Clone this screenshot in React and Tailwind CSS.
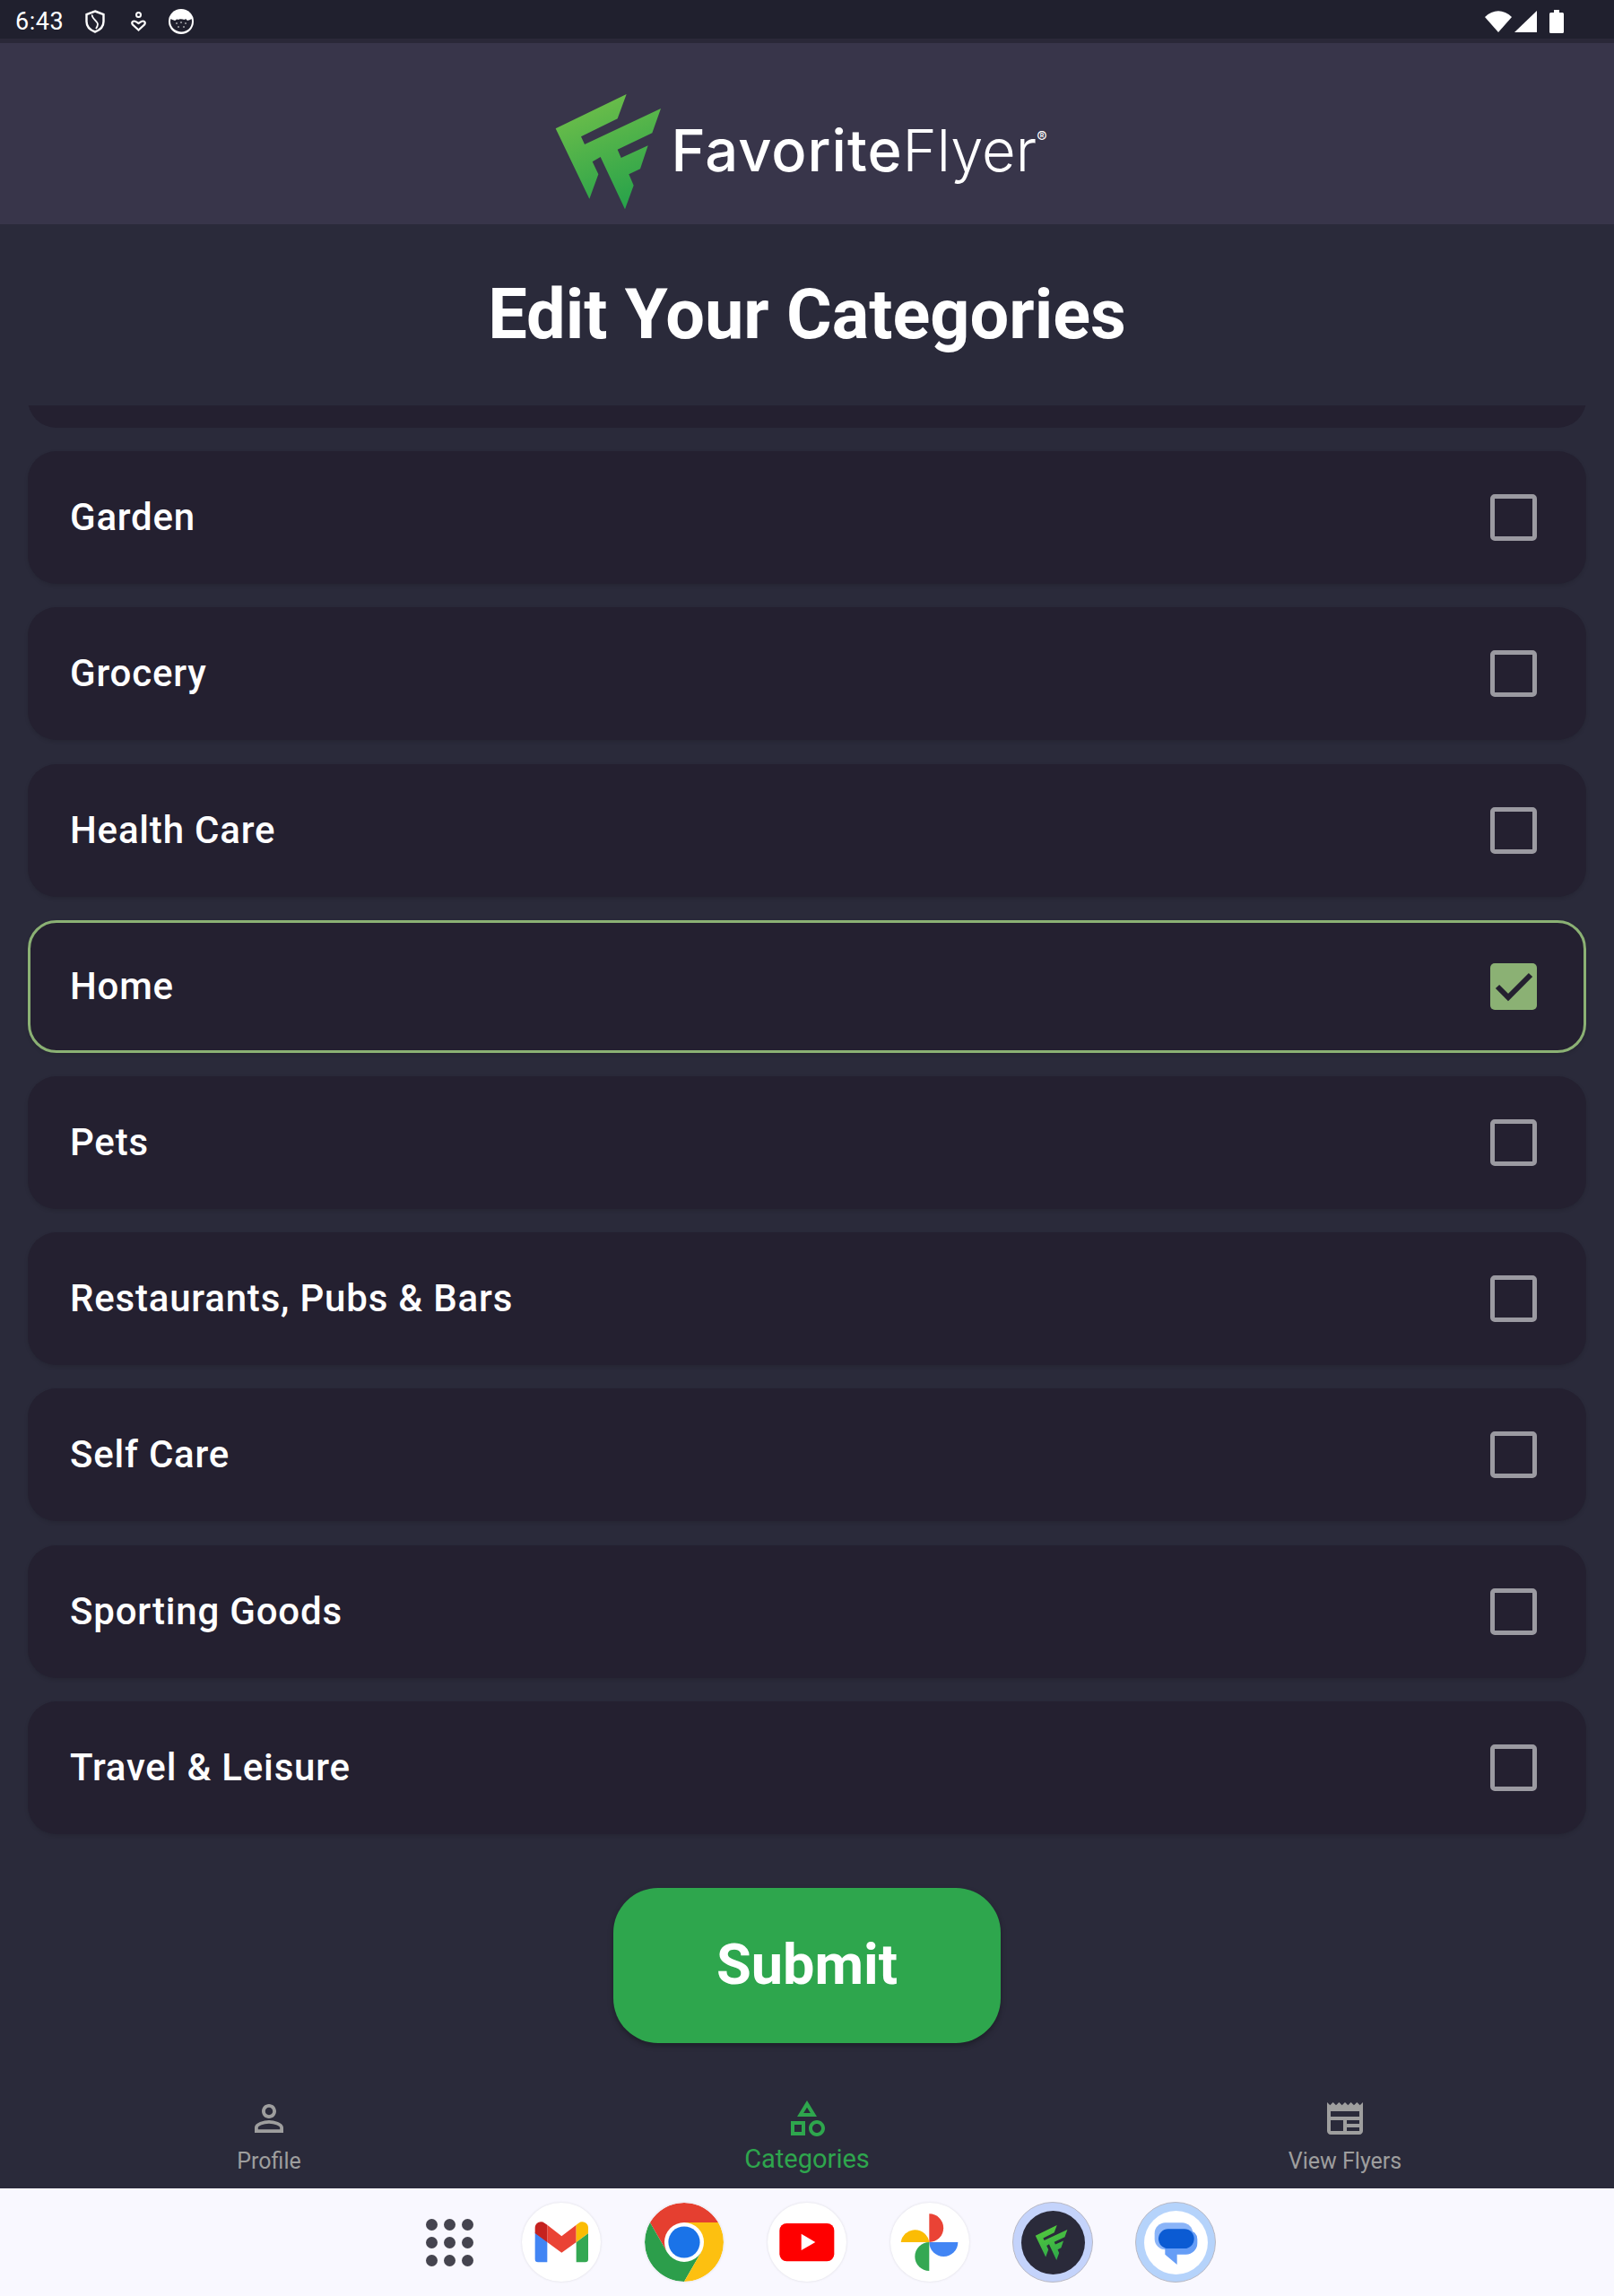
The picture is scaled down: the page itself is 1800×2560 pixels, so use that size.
import React from 'react'

const categories = ['Garden', 'Grocery', 'Health Care', 'Home', 'Pets', 'Restaurants, Pubs & Bars', 'Self Care', 'Sporting Goods', 'Travel & Leisure']

function LogoMark({ id, from, to, className }) {
  return (
    <svg viewBox="0 0 390 435" className={className}>
      <defs>
        <linearGradient id={id} x1="0.25" y1="0" x2="0.6" y2="1">
          <stop offset="0" stopColor={from} />
          <stop offset="1" stopColor={to} />
        </linearGradient>
      </defs>
      <path fill={`url(#${id})`} d="M5 145L242 30L212 112L90 172L102 198L357 78L328 160L212 215L224 243L314 202L288 280L250 298L266 335L237 415L155 240L128 256L148 298L118 380Z" />
    </svg>
  )
}

function StatusBar() {
  return (
    <div className="h-[43px] pt-[5px] bg-[#20202e] flex items-center justify-between pl-[17px] pr-[56px] text-white">
      <div className="flex items-center">
        <span className="font-[Roboto,sans-serif] text-[27px] leading-none tracking-[0.5px] w-[78px]">6:43</span>
        <svg viewBox="0 0 22 26" className="w-[22px] h-[26px]">
          <path d="M11 1.500L20.500 5v8c0 5.500-4 9.500-9.500 11.500C5.500 22.500 1.500 18.500 1.500 13V5z" fill="none" stroke="white" strokeWidth="2.400" />
          <path d="M8 5.500c-2 3 6 7 6 10.500 0 2-1 3.500-2 5" fill="none" stroke="white" strokeWidth="1.800" />
        </svg>
        <svg viewBox="0 0 17 22" className="w-[17px] h-[22px] ml-[29px]">
          <circle cx="8.500" cy="3.500" r="2.500" fill="none" stroke="white" strokeWidth="2" />
          <path d="M8.500 20.500L2 14.500c-1.500-2-.5-4 1.500-4 2 0 3.500 1.500 5 2.500 1.500-1 3-2.500 5-2.500s3 2 1.500 4z" fill="none" stroke="white" strokeWidth="2.200" />
        </svg>
        <svg viewBox="0 0 28 28" className="w-[28px] h-[28px] ml-[25px]">
          <circle cx="14" cy="14" r="14" fill="white" />
          <path d="M2.500 11c2 1.500 3 1 4.500 2 2-1 2-2 3.500-1 1.500-1 5-1 7 0 1.500-1 2-1 3.500 1 2-1 3-.5 4.500-2 .5 1 .5 2 .5 3 0 6.500-5 11.500-11.500 11.500S2 20.500 2 14c0-1 .2-2 .5-3z" fill="#20202e" />
          <g fill="white">
            <circle cx="9" cy="16" r="0.800" />
            <circle cx="14" cy="15" r="0.800" />
            <circle cx="19" cy="16" r="0.800" />
            <circle cx="11" cy="20" r="0.800" />
            <circle cx="17" cy="20" r="0.800" />
          </g>
        </svg>
      </div>
      <div className="flex items-center">
        <svg viewBox="0 0 30 24" className="w-[30px] h-[24px]">
          <path d="M0 7C9-2 21-2 30 7L15 24z" fill="white" />
        </svg>
        <svg viewBox="0 0 25 24" className="w-[25px] h-[24px] ml-[3px]">
          <path d="M25 0V24H0z" fill="white" />
        </svg>
        <svg viewBox="0 0 16 26" className="w-[16px] h-[26px] ml-[14px]">
          <path d="M5 0h6v3h3.500q1.500 0 1.500 1.500V24.500q0 1.500-1.500 1.500h-13Q0 26 0 24.500V4.500Q0 3 1.500 3H5z" fill="white" />
        </svg>
      </div>
    </div>
  )
}

function CategoryRow({ name, checked }) {
  return (
    <div className={`h-[148px] shrink-0 rounded-[32px] bg-[#242030] flex items-center justify-between shadow-[0_2px_4px_rgba(0,0,0,0.12)] ${checked ? 'border-[3px] border-[#8bb174] pl-[44px] pr-[52px]' : 'pl-[47px] pr-[55px]'}`}>
      <span className="font-[Roboto,sans-serif] font-medium text-[42px] leading-none tracking-[0.8px] text-white">{name}</span>
      {checked ? (
        <div className="w-[52px] h-[52px] rounded-[5px] bg-[#8bb174] flex items-center justify-center">
          <svg viewBox="0 0 52 52" className="w-[52px] h-[52px]">
            <path d="M8 26L20 38L45 13" fill="none" stroke="#242030" strokeWidth="6" />
          </svg>
        </div>
      ) : (
        <div className="w-[52px] h-[52px] rounded-[5px] border-[5px] border-[#9b9aa1]" />
      )}
    </div>
  )
}

function NavItem({ label, active, d }) {
  return (
    <div className="flex flex-col items-center pt-[28px]">
      <svg viewBox="0 0 24 24" className="w-[48px] h-[48px]" fill={active ? '#2ea64d' : '#9e9e9e'}>
        <path d={d} />
      </svg>
      <span className={`font-[Roboto,sans-serif] leading-none ${active ? 'text-[29px] text-[#2ea64d] mt-[7px]' : 'text-[25px] text-[#9e9e9e] mt-[11px]'}`}>{label}</span>
    </div>
  )
}

function DockCircle({ children }) {
  return (
    <div className="w-[137px] flex justify-center">
      <div className="w-[88px] h-[88px] rounded-full bg-white shadow-[0_0_3px_rgba(0,0,0,0.12)] overflow-hidden">{children}</div>
    </div>
  )
}

function Dock() {
  return (
    <div className="h-[120px] bg-[#f9f8ff] flex items-center justify-center">
      <div className="w-[137px] flex justify-center pl-[24px]">
        <div className="grid grid-cols-3 gap-[7px]">
          {[...Array(9)].map((_, i) => (
            <div key={i} className="w-[13px] h-[13px] rounded-full bg-[#45444f]" />
          ))}
        </div>
      </div>
      <DockCircle>
        <svg viewBox="0 0 264 264" className="w-full h-full">
          <path d="M44 100L85 130V199H54a10 10 0 0 1-10-10z" fill="#4285f4" />
          <path d="M182 132L222 102V189a10 10 0 0 1-10 10H182z" fill="#34a853" />
          <path d="M85 74L133 112L182 74V132L133 167L85 132z" fill="#ea4335" />
          <path d="M44 102V84a20 20 0 0 1 32-16L85 74V132z" fill="#c5221f" />
          <path d="M182 74L190 68a20 20 0 0 1 32 16V102L182 132z" fill="#fbbc04" />
        </svg>
      </DockCircle>
      <DockCircle>
        <svg viewBox="0 0 48 48" className="w-full h-full">
          <path d="M24 12H44.780A24 24 0 0 0 3.220 12L13.600 30L24 24z" fill="#e53f30" />
          <path d="M3.220 12A24 24 0 0 0 24 48L34.400 30L13.600 30z" fill="#2c9e4b" />
          <path d="M44.780 12A24 24 0 0 1 24 48L34.400 30L24 24V12z" fill="#fdc010" />
          <circle cx="24" cy="24" r="12" fill="white" />
          <circle cx="24" cy="24" r="9.600" fill="#1a73e8" />
        </svg>
      </DockCircle>
      <DockCircle>
        <svg viewBox="0 0 264 264" className="w-full h-full">
          <rect x="40" y="69" width="183" height="127" rx="24" fill="#ff0000" />
          <path d="M113 104L160 132L113 159z" fill="white" />
        </svg>
      </DockCircle>
      <DockCircle>
        <svg viewBox="0 0 264 264" className="w-full h-full">
          <path d="M130 37A47.500 47.500 0 0 1 130 132z" fill="#ea4335" />
          <path d="M130 132H226A48 48 0 0 1 130 132z" fill="#4285f4" />
          <path d="M130 228A48 48 0 0 1 130 132z" fill="#34a853" />
          <path d="M35 132A48 48 0 0 1 130 132z" fill="#fbbc04" />
        </svg>
      </DockCircle>
      <div className="w-[137px] flex justify-center">
        <div className="w-[90px] h-[90px] rounded-full bg-[#c4d3fb] border border-[#b9b9c4] flex items-center justify-center">
          <div className="w-[71px] h-[71px] rounded-full bg-[#2a2a3a] flex items-center justify-center">
            <LogoMark id="ffSmall" from="#55cb3c" to="#2fa84a" className="w-[40px] h-[44px]" />
          </div>
        </div>
      </div>
      <div className="w-[137px] flex justify-center">
        <div className="w-[90px] h-[90px] rounded-full bg-[#b5d3fb] border border-[#b9b9c4] flex items-center justify-center">
          <div className="w-[71px] h-[71px] rounded-full bg-white overflow-hidden">
            <svg viewBox="0 0 213 213" className="w-full h-full">
              <rect x="35" y="40" width="128" height="90" rx="36" fill="#8ab4f8" />
              <path d="M70 65H148a30 30 0 0 1 30 30V108a38 38 0 0 1-38 38H110V180L70 146z" fill="#669df6" />
              <rect x="48" y="61" width="119" height="65" rx="32" fill="#0b5bd3" />
            </svg>
          </div>
        </div>
      </div>
    </div>
  )
}

export default function App() {
  return (
    <div className="w-[1800px] h-[2560px] bg-[#2a2a3a] flex flex-col font-[Roboto,sans-serif]">
      <StatusBar />
      <div className="h-[5px] bg-[#2a2838]" />
      <div className="h-[202px] pt-[36px] pr-[14px] bg-[#38354a] flex items-center justify-center">
        <LogoMark id="ffLarge" from="#72c04a" to="#27a24a" className="w-[130px] h-[145px]" />
        <div className="flex items-start font-[Inter,sans-serif] text-white text-[65px] leading-none">
          <span className="font-medium tracking-[1px]">Favorite</span>
          <span className="font-light">Flyer</span>
          <span className="text-[17px] mt-[10px]">®</span>
        </div>
      </div>
      <div className="h-[202px] flex items-center justify-center">
        <h1 className="text-[77.5px] font-bold leading-none text-white">Edit Your Categories</h1>
      </div>
      <div className="h-[1600px] overflow-hidden px-[31px] flex flex-col gap-[26.2px] shrink-0">
        <div className="h-[148px] shrink-0 -mt-[123px] rounded-[32px] bg-[#242030]" />
        {categories.map((name) => (
          <CategoryRow key={name} name={name} checked={name === 'Home'} />
        ))}
      </div>
      <div className="flex-1 flex justify-center pt-[53px]">
        <button className="w-[432px] h-[173px] rounded-[50px] bg-[#2ea64d] text-white text-[63px] font-bold shadow-[0_3px_6px_rgba(0,0,0,0.3)]">Submit</button>
      </div>
      <div className="h-[130px] grid grid-cols-3">
        <NavItem label="Profile" d="M12 5.900c1.160 0 2.100.94 2.100 2.100s-.94 2.100-2.100 2.100S9.900 9.160 9.900 8s.94-2.100 2.100-2.100m0 9c2.970 0 6.100 1.460 6.100 2.100v1.100H5.900V17c0-.64 3.130-2.100 6.100-2.100M12 4C9.790 4 8 5.790 8 8s1.790 4 4 4 4-1.790 4-4-1.790-4-4-4zm0 9c-2.670 0-8 1.340-8 4v3h16v-3c0-2.660-5.330-4-8-4z" />
        <NavItem label="Categories" active d="M12 2l-5.500 9h11L12 2zm0 3.840L13.930 9h-3.870L12 5.840zM17.500 13c-2.490 0-4.500 2.010-4.500 4.500s2.010 4.500 4.500 4.500 4.500-2.010 4.500-4.500-2.010-4.500-4.500-4.500zm0 7c-1.380 0-2.500-1.120-2.500-2.500s1.120-2.500 2.500-2.500 2.500 1.120 2.500 2.500-1.120 2.500-2.500 2.500zM3 21.500h8v-8H3v8zm2-6h4v4H5v-4z" />
        <NavItem label="View Flyers" d="M22 3l-1.670 1.670L18.670 3 17 4.670 15.330 3l-1.660 1.670L12 3l-1.670 1.670L8.670 3 7 4.670 5.330 3 3.670 4.670 2 3v16c0 1.100.9 2 2 2h16c1.100 0 2-.9 2-2V3zM11 19H4v-6h7v6zm9 0h-7v-2h7v2zm0-4h-7v-2h7v2zm0-4H4V8h16v3z" />
      </div>
      <Dock />
    </div>
  )
}
